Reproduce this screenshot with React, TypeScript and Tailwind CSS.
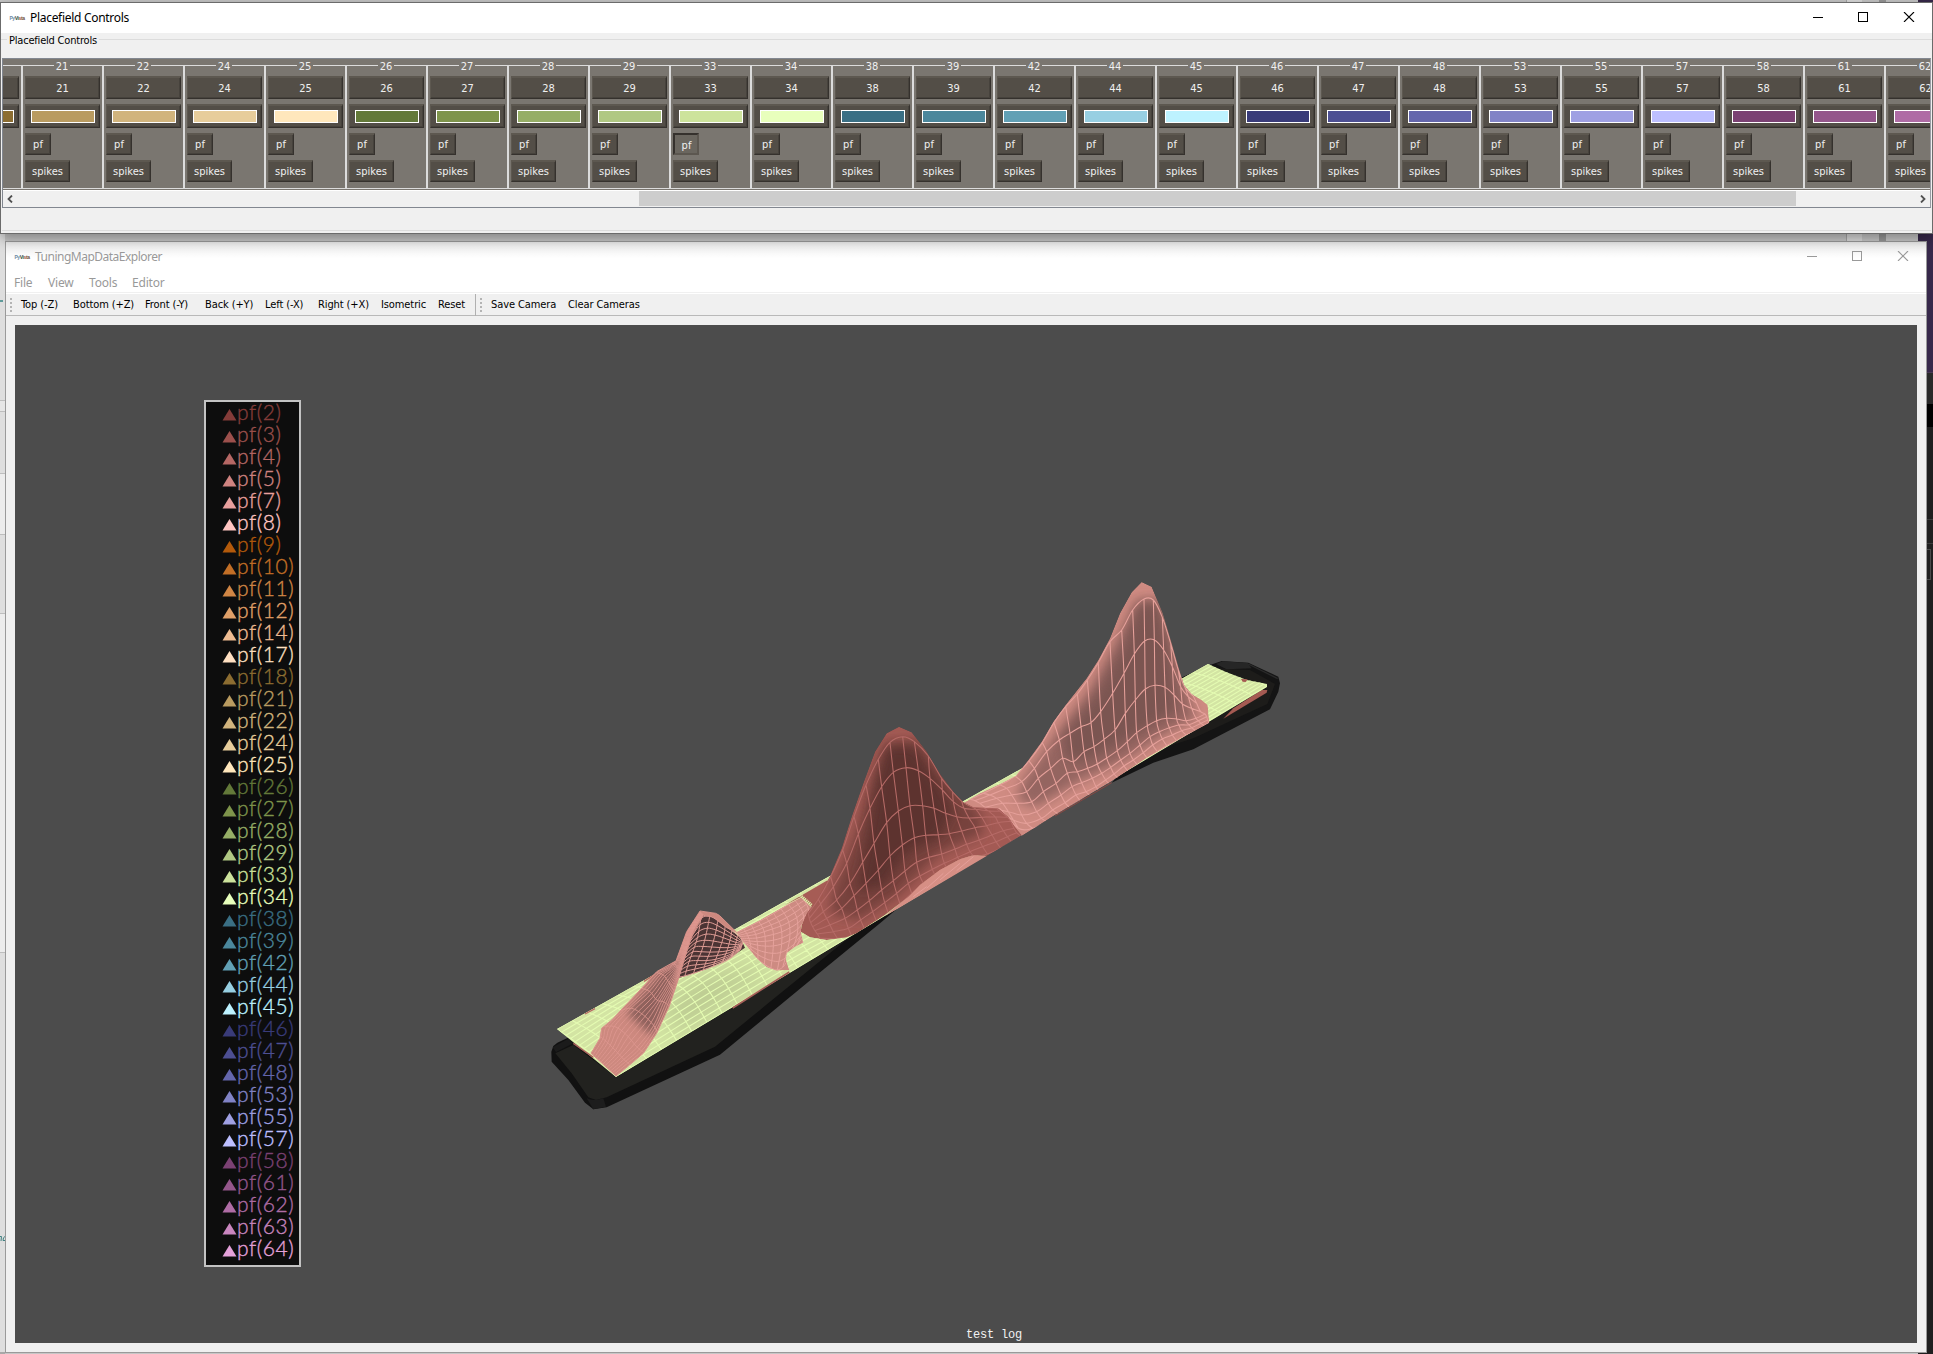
import React from "react";

const UI = "font-['DejaVu_Sans_Condensed','DejaVu_Sans',sans-serif] [font-stretch:condensed] text-[11px]";
const TITLE = "font-['Noto_Sans','Open_Sans',sans-serif] text-[12px]";

/* ---------- data ---------- */
const cells: [number, string][] = [
  [2, "#843c39"], [3, "#9c504c"], [4, "#b56764"], [5, "#cf8380"], [7, "#e8a09d"], [8, "#ffc5c2"],
  [9, "#b35a0b"], [10, "#c26f26"], [11, "#d08645"], [12, "#e0a068"], [14, "#efbc92"], [17, "#ffe0c2"],
  [18, "#8c6d31"], [21, "#b99b60"], [22, "#d1b47d"], [24, "#e7cd9b"], [25, "#ffe7bc"],
  [26, "#637939"], [27, "#7e944b"], [28, "#96ae66"], [29, "#b0c883"], [33, "#cde39c"], [34, "#e8ffbc"],
  [38, "#3a6f84"], [39, "#4b879c"], [42, "#61a0b5"], [44, "#97cfe2"], [45, "#bdf2ff"],
  [46, "#393b79"], [47, "#4d4f93"], [48, "#6466ac"], [53, "#8183c6"], [55, "#9fa0e3"], [57, "#bdbfff"],
  [58, "#7b4173"], [61, "#94568b"], [62, "#af6ca5"], [63, "#c986bf"], [64, "#e4a1da"],
];

const stripCells = cells.slice(13, 37);

/* ---------- geometry helpers ---------- */
type P = [number, number];
const pts = (p: P[]) => p.map((q) => q.join(",")).join(" ");
const smooth = (p: P[]) => {
  let d = `M${p[0][0]} ${p[0][1]}`;
  for (let i = 0; i < p.length - 1; i++) {
    const a = p[i - 1] ?? p[i], b = p[i], c = p[i + 1], e = p[i + 2] ?? c;
    d += `C${b[0] + (c[0] - a[0]) / 6} ${b[1] + (c[1] - a[1]) / 6} ${c[0] - (e[0] - b[0]) / 6} ${c[1] - (e[1] - b[1]) / 6} ${c[0]} ${c[1]}`;
  }
  return d;
};
const at = (c: P[], t: number): P => {
  const f = t * (c.length - 1), i = Math.min(Math.floor(f), c.length - 2), u = f - i;
  return [c[i][0] + (c[i + 1][0] - c[i][0]) * u, c[i][1] + (c[i + 1][1] - c[i][1]) * u];
};
const mesh = (cols: P[][], rows: number) => {
  let d = cols.map(smooth).join("");
  for (let r = 0; r <= rows; r++) d += smooth(cols.map((c) => at(c, r / rows)));
  return d;
};
const densify = (cols: P[][], n: number) => {
  const rows = cols[0].length;
  const out: P[][] = [];
  for (let k = 0; k <= n; k++) {
    const c: P[] = [];
    for (let r = 0; r < rows; r++) c.push(at(cols.map((q) => q[r]), k / n));
    out.push(c);
  }
  return out;
};

/* ---------- surfaces ---------- */
const middle: P[][] = [
  [[85, 640], [88, 655], [92, 668], [98, 680], [105, 692], [112, 702], [120, 715]],
  [[115, 598], [122, 612], [130, 635], [140, 655], [150, 675], [160, 695], [172, 715]],
  [[152, 530], [160, 560], [170, 600], [185, 625], [195, 655], [205, 685], [215, 708]],
  [[188, 450], [200, 490], [210, 550], [222, 587], [232, 630], [242, 660], [255, 690]],
  [[222, 350], [235, 402], [248, 487], [258, 550], [268, 602], [278, 635], [290, 665]],
  [[258, 255], [270, 325], [282, 430], [295, 510], [305, 570], [314, 608], [325, 640]],
  [[295, 178], [305, 260], [320, 368], [330, 468], [340, 542], [350, 580], [360, 612]],
  [[330, 127], [340, 217], [355, 333], [367, 435], [375, 513], [385, 550], [395, 580]],
  [[368, 110], [378, 203], [390, 317], [403, 413], [410, 487], [420, 528], [430, 550]],
  [[403, 125], [415, 212], [428, 317], [437, 406], [447, 472], [457, 508], [468, 530]],
  [[445, 168], [450, 235], [462, 325], [475, 404], [485, 462], [493, 490], [505, 510]],
  [[485, 235], [487, 270], [497, 340], [508, 401], [525, 447], [533, 472], [545, 490]],
  [[518, 275], [520, 305], [530, 350], [545, 393], [560, 433], [570, 455], [585, 472]],
  [[545, 303], [552, 325], [567, 354], [585, 383], [598, 420], [608, 440], [622, 462]],
  [[575, 320], [588, 328], [605, 352], [620, 377], [636, 405], [648, 425], [662, 445]],
  [[612, 324], [624, 332], [645, 350], [655, 368], [670, 392], [682, 410], [694, 425]],
  [[648, 324], [660, 334], [683, 352], [692, 364], [702, 385], [710, 398], [722, 408]],
];
const middleOutline: P[] = [
  [62, 695], [65, 675], [80, 640], [110, 600], [150, 528], [185, 445], [215, 350], [250, 250], [285, 155],
  [320, 100], [357, 80], [395, 97], [440, 155], [480, 222], [520, 275], [550, 307], [580, 322], [655, 325],
  [685, 350], [705, 380], [725, 405], [620, 468], [580, 466], [540, 478], [480, 510], [420, 555], [385, 590],
  [315, 645], [230, 700], [200, 712], [140, 720], [90, 712],
];

const right: P[][] = [
  [[-30, 718], [-15, 722], [0, 730], [15, 742], [30, 745], [45, 745], [60, 746]],
  [[10, 700], [30, 705], [50, 715], [68, 730], [85, 755], [100, 780], [115, 805]],
  [[60, 675], [80, 685], [95, 705], [110, 730], [125, 765], [140, 790], [158, 805]],
  [[105, 648], [125, 665], [140, 695], [155, 725], [170, 755], [185, 775], [200, 785]],
  [[147, 603], [163, 625], [175, 655], [190, 695], [205, 730], [218, 750], [235, 762]],
  [[187, 548], [200, 575], [212, 625], [228, 670], [243, 705], [255, 728], [268, 742]],
  [[222, 488], [238, 540], [248, 595], [262, 640], [276, 680], [288, 705], [300, 722]],
  [[257, 440], [270, 520], [280, 605], [292, 635], [305, 668], [318, 695], [332, 708]],
  [[292, 402], [303, 500], [312, 575], [323, 625], [337, 655], [348, 680], [360, 695]],
  [[322, 360], [333, 488], [342, 560], [352, 612], [365, 640], [377, 660], [390, 675]],
  [[355, 308], [362, 455], [372, 538], [380, 594], [392, 622], [402, 642], [415, 655]],
  [[390, 245], [398, 400], [405, 510], [412, 572], [422, 600], [432, 618], [445, 635]],
  [[425, 210], [432, 340], [436, 460], [442, 545], [450, 580], [460, 600], [473, 615]],
  [[458, 150], [463, 282], [466, 420], [470, 518], [480, 555], [490, 578], [502, 595]],
  [[492, 117], [494, 243], [496, 387], [502, 497], [510, 530], [518, 555], [532, 575]],
  [[520, 120], [523, 240], [525, 376], [530, 482], [538, 515], [547, 537], [560, 557]],
  [[547, 172], [551, 270], [555, 382], [560, 475], [568, 503], [577, 525], [590, 542]],
  [[572, 250], [577, 320], [582, 405], [590, 477], [597, 495], [605, 512], [618, 525]],
  [[595, 330], [602, 380], [607, 432], [618, 482], [627, 494], [635, 503], [647, 512]],
  [[615, 382], [625, 410], [635, 445], [648, 475], [655, 482], [663, 490], [672, 497]],
  [[640, 408], [650, 430], [662, 455], [675, 462], [680, 470], [683, 480], [688, 488]],
];
const rightOutline: P[] = [
  [-60, 735], [0, 700], [60, 672], [108, 647], [145, 600], [185, 545], [220, 485], [255, 437], [320, 355],
  [355, 300], [390, 235], [420, 160], [455, 97], [485, 66], [515, 80], [548, 160], [575, 250], [595, 320],
  [612, 375], [635, 402], [665, 420], [683, 435], [688, 488], [600, 536], [500, 594], [395, 664], [225, 765],
  [125, 828], [60, 760], [-60, 760],
];

const ramp: P[][] = [
  [[153, 520], [172, 537], [192, 555], [210, 572], [228, 588]],
  [[182, 470], [205, 490], [230, 515], [250, 537], [270, 554]],
  [[188, 440], [225, 440], [260, 465], [290, 500], [312, 518]],
  [[240, 392], [275, 385], [310, 405], [340, 435], [352, 458]],
  [[305, 325], [330, 335], [350, 360], [370, 365], [388, 378]],
  [[350, 278], [370, 285], [385, 305], [395, 320], [402, 335]],
  [[400, 247], [405, 252], [412, 262], [418, 265], [422, 268]],
  [[440, 158], [443, 158], [449, 158], [453, 158], [457, 158]],
  [[480, 95], [482, 97], [484, 99], [487, 102], [490, 105]],
];
const rampOutline: P[] = [
  [153, 520], [180, 475], [185, 445], [215, 420], [300, 330], [350, 275], [400, 247], [408, 243], [440, 155],
  [480, 93], [527, 100], [538, 106], [590, 157], [560, 143], [518, 110], [490, 106], [457, 165], [432, 240],
  [415, 298], [388, 378], [350, 460], [310, 520], [265, 558], [228, 588],
];
const hollow: P[][] = [
  [[455, 165], [445, 195], [435, 230], [425, 262], [415, 292]],
  [[487, 108], [478, 165], [465, 205], [450, 245], [438, 287]],
  [[518, 110], [508, 155], [495, 210], [480, 245], [470, 277]],
  [[545, 130], [540, 165], [525, 210], [512, 245], [505, 264]],
  [[570, 148], [565, 175], [555, 210], [545, 235], [538, 252]],
  [[590, 162], [585, 185], [580, 205], [572, 225], [568, 238]],
  [[610, 185], [608, 190], [606, 195], [604, 200], [602, 208]],
];
const flare: P[][] = [
  [[590, 158], [600, 170], [610, 185], [612, 190]],
  [[630, 138], [642, 165], [648, 195], [650, 235]],
  [[670, 118], [688, 150], [690, 200], [685, 262]],
  [[710, 95], [732, 135], [735, 190], [720, 272]],
  [[750, 70], [775, 110], [775, 165], [745, 240]],
  [[785, 50], [805, 85], [805, 120], [788, 188]],
];
const flareOutline: P[] = [
  [588, 157], [660, 120], [730, 80], [785, 52], [815, 82], [785, 135], [783, 160], [790, 188], [765, 200],
  [740, 220], [738, 240], [748, 270], [710, 272], [680, 262], [650, 235], [610, 185],
];

const sheet: P[][] = Array.from({ length: 44 }, (_, i) => {
  const t = i / 43;
  const a: P = [557 + 651 * t, 1029 - 365 * t], b: P = [616 + 651 * t, 1076.7 - 390.7 * t];
  const bump = 12 * Math.sin(Math.PI * Math.min(1, t * 2.6)) + 2;
  return [0, 0.15, 0.3, 0.45, 0.6, 0.75, 0.88, 1].map((u): P => [
    a[0] + (b[0] - a[0]) * u + bump * 0.3 * Math.sin(Math.PI * u),
    a[1] + (b[1] - a[1]) * u - bump * Math.sin(Math.PI * u),
  ]);
});

const Scene = () => (
  <svg className="block h-full w-full" viewBox="15 325 1902 1018">
    <defs>
      <clipPath id="mid"><polygon points={pts(middleOutline)} /></clipPath>
      <clipPath id="rgt"><polygon points={pts(rightOutline)} /></clipPath>
      <clipPath id="rmp"><polygon points={pts(rampOutline)} /></clipPath>
      <clipPath id="flr"><polygon points={pts(flareOutline)} /></clipPath>
      <clipPath id="sht"><polygon points="557,1029 1208,664 1226,672 1247,680 1267,684 1267,687 616,1077" /></clipPath>
      <filter id="shade" x="-50%" y="-50%" width="200%" height="200%"><feGaussianBlur stdDeviation="18" /></filter>
      <filter id="shadeSmall" x="-50%" y="-50%" width="200%" height="200%"><feGaussianBlur stdDeviation="12" /></filter>
    </defs>

    {/* track */}
    <g transform="translate(540 880) scale(.33333)">
      <polygon fill="#111111" points="35,545 34,515 40,498 52,488 90,470 600,300 1150,20 1020,130 800,310 540,524 200,682 160,688 135,668 85,600" />
      <polygon fill="#22221f" points="46,520 100,495 230,592 700,270 930,170 525,500 200,652 168,660 145,652 95,580" />
      <path d="M140 655Q160 665 190 655L198 680 160 688Z" fill="#1d1d1d" />
      <path d="M38 502L85 476 100 490 48 516Z" fill="#1b1b1b" />
    </g>
    <g transform="translate(980 560) scale(.33333)">
      <polygon fill="#141414" points="560,372 610,350 690,315 725,303 805,308 895,350 900,370 895,395 870,448 640,568 520,608 395,668 560,480" />
      <polygon fill="#1d1c1a" points="690,320 740,328 810,330 885,372 862,432 640,535 560,560 600,400" />
      <polygon fill="#262626" points="708,312 728,304 803,309 815,325 740,328" />
      <path d="M805 312L893 356" stroke="#2a2a2a" strokeWidth="4" />
      <polygon fill="#a55a52" points="845,390 862,390 860,398 730,476 760,445" />
    </g>

    {/* flat field */}
    <g clipPath="url(#sht)">
      <rect x="550" y="650" width="730" height="440" fill="#d3e4a3" />
      <path d="M660 1010L700 975 760 965 770 975 730 1000 680 1035Z" fill="#bccb92" filter="url(#shadeSmall)" />
      <path d={mesh(sheet, 14)} fill="none" stroke="#e4fbb2" strokeWidth="1.1" />
    </g>
    <g transform="translate(980 560) scale(.33333)">
      <path d="M395 668L225 768" stroke="#8a4742" strokeWidth="3" />
      <polygon fill="#a55a52" points="783,357 803,358 797,366 788,365" />
    </g>

    {/* left field */}
    <g transform="translate(540 880) scale(.33333)">
      <path d="M578 384L748 276" stroke="#a8605a" strokeWidth="5" />
      <path d="M100 490L160 532" stroke="#a8605a" strokeWidth="4" />
      <path d="M135 402L165 386M312 304L350 280" stroke="#b86a63" strokeWidth="4" />
      <polygon fill="#a65c55" points="730,78 860,2 900,0 860,60 815,80 785,50" />
      <g clipPath="url(#flr)">
        <polygon points={pts(flareOutline)} fill="#cd8b82" />
        <path d={mesh(densify(flare, 9), 9)} fill="none" stroke="#e5a29c" strokeWidth="3" />
      </g>
      <path d="M780 45L795 58 815 76" stroke="#dcf0a9" strokeWidth="9" strokeDasharray="4 2" fill="none" />
      <polygon fill="#4b3434" points="490,105 520,108 560,140 600,172 615,203 560,240 500,267 415,295 430,240 455,165" />
      <path d={mesh(densify(hollow, 7), 11)} fill="none" stroke="#df9c95" strokeWidth="3" />
      <g clipPath="url(#rmp)">
        <polygon points={pts(rampOutline)} fill="#cd897f" />
        <path d="M380 250L260 400 340 470 430 290 440 220Z" fill="#8d605b" filter="url(#shadeSmall)" />
        <path d={mesh(ramp, 13)} fill="none" stroke="#de9890" strokeWidth="2.4" />
      </g>
      <polygon points={pts(rampOutline)} fill="none" stroke="#d8928a" strokeWidth="3" />
    </g>

    {/* right field */}
    <g transform="translate(980 560) scale(.33333)">
      <g clipPath="url(#rgt)">
        <polygon points={pts(rightOutline)} fill="#cf8b82" />
        <path d="M470 120L540 120 590 290 635 430 650 475 560 520 440 600 300 665 170 740 110 720 130 660 230 520 330 390 400 260Z" fill="#946560" filter="url(#shade)" />
        <path d="M480 130L530 125 565 250 590 450 440 540 320 600 260 600 250 530 350 400 430 260Z" fill="#775250" opacity=".85" filter="url(#shade)" />
        <path d={mesh(right, 6)} fill="none" stroke="#e5a09a" strokeWidth="3.2" />
      </g>
    </g>

    {/* middle field */}
    <g transform="translate(780 700) scale(.33333)">
      <polygon fill="#d68f85" points="620,468 580,464 540,476 480,508 420,553 385,588 315,648 350,628" />
      <path d="M400 590L440 560M440 565L490 520M480 540L540 490M530 512L580 470" stroke="#e5a09a" strokeWidth="3" />
      <g clipPath="url(#mid)">
        <polygon points={pts(middleOutline)} fill="#a35a54" />
        <path d="M320 125L410 120 520 260 600 340 610 400 480 460 350 590 240 660 150 640 160 570 230 390 280 220Z" fill="#77423d" filter="url(#shade)" />
        <path d="M320 140L405 140 470 240 520 330 480 410 380 460 310 560 230 570 260 420 290 250Z" fill="#5a322f" opacity=".9" filter="url(#shade)" />
        <path d={mesh(middle, 6)} fill="none" stroke="#b56a66" strokeWidth="3.2" />
      </g>
    </g>
  </svg>
);

/* ---------- chrome ---------- */
const AppIcon = () => (
  <span className="flex h-4 w-4 items-center justify-center font-['Liberation_Sans',sans-serif] text-[5px] font-bold leading-none tracking-[-0.4px]">
    <span className="text-[#6f8ba5]">Py</span>
    <span className="text-[#2f4a3c]">Vi</span>
    <span className="text-[#a0522d]">s</span>
    <span className="text-[#6d4b3a]">ta</span>
  </span>
);

const WindowButtons = ({ color }: { color: string }) => (
  <svg className="h-[10px] w-[102px]" viewBox="0 0 102 10" fill="none" stroke={color} shapeRendering="crispEdges">
    <path d="M0 5.5H10" />
    <rect x="45.5" y="0.5" width="9" height="9" />
    <path d="M91 0L101 10M101 0L91 10" shapeRendering="auto" strokeWidth="1.1" />
  </svg>
);

const RAISED = "border-t-2 border-l border-t-[#5d5850] border-l-[#5d5850] border-b border-r border-b-[#35312d] border-r-[#35312d] bg-[#534e47] shadow-[inset_-1px_-1px_0_#46423c]";

const Column = ({ id, color }: { id: number; color: string }) => (
  <div className={`relative flex h-[124px] w-[81px] shrink-0 flex-col items-start border border-[#dcdcdc] pl-[2px] pt-[10px] text-[#f0f0f0] ${UI}`}>
    <span className="absolute left-[31px] top-[-7px] w-[16px] bg-[#7a7670] text-center leading-[15px]">{id}</span>
    <div className={`flex h-[23px] w-[75px] items-center justify-center pt-[2px] ${RAISED}`}>{id}</div>
    <div className={`mt-[5px] flex h-6 w-[75px] items-center justify-center ${RAISED}`}>
      <div className="h-[13px] w-[64px] border border-white" style={{ backgroundColor: color }} />
    </div>
    {id === 33 ? (
      <div className="mt-[5px] flex h-[22px] w-[26px] items-center justify-center border-2 border-b-[#5c5750] border-l-[#35312d] border-r-[#5c5750] border-t-[#35312d] bg-[#6a665f] pl-px pt-[4px]">pf</div>
    ) : (
      <div className={`mt-[5px] flex h-[22px] w-[26px] items-center justify-center pt-[2px] ${RAISED}`}>pf</div>
    )}
    <div className={`mt-[5px] flex h-[22px] w-[45px] items-center justify-center pt-[2px] ${RAISED}`}>spikes</div>
  </div>
);

/* visible right edge of the group that is scrolled out on the left */
const ColumnTail = () => (
  <div className="flex h-[124px] w-[19px] shrink-0 flex-col border-y border-r border-[#dcdcdc] pt-[10px]">
    <div className={`h-[23px] w-[16px] ${RAISED} border-l-0`} />
    <div className={`mt-[5px] flex h-6 w-[16px] items-center ${RAISED} border-l-0`}>
      <div className="h-[13px] w-[11px] border border-l-0 border-white bg-[#8c6d31]" />
    </div>
  </div>
);

const Chevron = ({ flip }: { flip?: boolean }) => (
  <svg className="h-[8px] w-[6px]" viewBox="0 0 6 8" fill="none" stroke="#505050" strokeWidth="1.8">
    <path d={flip ? "M1 .5L4.5 4 1 7.5" : "M5 .5L1.5 4 5 7.5"} />
  </svg>
);

const ControlsWindow = () => (
  <div className="absolute left-0 top-[2px] flex h-[232px] w-[1933px] flex-col border border-[#6b6b6b] bg-[#f0f0f0] shadow-[0_4px_12px_rgba(0,0,0,0.35)]">
    <div className="flex h-[30px] shrink-0 items-center bg-white pl-[8px] pr-[13px]">
      <AppIcon />
      <span className={`ml-[5px] flex-1 text-black ${TITLE} tracking-[-0.3px]`}>Placefield Controls</span>
      <div className="-translate-y-px pr-[4px]"><WindowButtons color="#000000" /></div>
    </div>
    <div className="relative flex h-[25px] shrink-0 items-start pt-[6px]">
      <div className="h-px w-full bg-[#dcdcdc]" />
      <span className={`absolute left-[6px] top-px whitespace-nowrap bg-[#f0f0f0] px-[2px] leading-[14px] tracking-[-0.2px] text-black ${UI}`}>Placefield Controls</span>
    </div>
    <div className="mx-px flex h-[150px] shrink-0 flex-col overflow-hidden border border-r-[#9a9ca4] border-l-[#828790] border-t-[#828790] border-b-[#828790]">
      <div className="flex h-[131px] shrink-0 overflow-hidden bg-[#7a7670] pt-[6px]">
        <ColumnTail />
        {stripCells.map(([id, color]) => (
          <Column key={id} id={id} color={color} />
        ))}
      </div>
      <div className="flex h-[17px] items-center border-t border-white bg-[#f0f0f0] pb-px pl-[4px] pr-[4px]">
        <Chevron />
        <div className="ml-[626px] h-[15px] w-[1157px] bg-[#cdcdcd]" />
        <div className="flex-1" />
        <Chevron flip />
      </div>
    </div>
    <div className="mx-px mt-[22px] h-px bg-[#dcdcdc]" />
  </div>
);

const menu: [string, string][] = [
  ["File", "w-[34px]"], ["View", "w-[41px]"], ["Tools", "w-[43px]"], ["Editor", "w-[40px]"],
];
const tools: [string, string][] = [
  ["Top (-Z)", "w-[52px]"], ["Bottom (+Z)", "w-[72px]"], ["Front (-Y)", "w-[60px]"], ["Back (+Y)", "w-[60px]"],
  ["Left (-X)", "w-[53px]"], ["Right (+X)", "w-[63px]"], ["Isometric", "w-[57px]"], ["Reset", "w-[37px]"],
];

const Grip = () => (
  <div className="flex flex-col gap-[2px]">
    {[0, 1, 2, 3].map((i) => (
      <div key={i} className="h-[2px] w-[2px] bg-[#b4b4b4]" />
    ))}
  </div>
);

const Legend = () => (
  <div className="absolute left-[189px] top-[75px] flex h-[867px] w-[97px] flex-col border-2 border-[#c3c3c3] bg-[#0d0d0d] pl-[16px]">
    {cells.map(([id, color]) => (
      <div key={id} className="flex h-[22px] shrink-0 items-center" style={{ color }}>
        <svg className="mt-[4px] h-[12px] w-[15px] shrink-0" viewBox="0 0 15 12">
          <path d="M7.5 0L14.5 11.5H.5Z" fill="currentColor" />
        </svg>
        <span className="-mt-[3px] font-['Lato',sans-serif] text-[21px] font-light leading-[22px] tracking-[0.55px] [-webkit-text-stroke:0.35px]">pf({id})</span>
      </div>
    ))}
  </div>
);

const ExplorerWindow = () => (
  <div className="absolute left-[5px] top-[241px] flex h-[1112px] w-[1922px] flex-col border border-[#9a9a9a] bg-[#f0f0f0]">
    <div className="flex h-[32px] shrink-0 items-center bg-linear-to-b from-[#e9e9e9] via-white via-50% to-white pb-[2px] pl-[8px] pr-[13px]">
      <AppIcon />
      <span className={`ml-[5px] flex-1 text-[#999999] ${TITLE} tracking-[-0.5px]`}>TuningMapDataExplorer</span>
      <div className="-translate-y-px pr-[4px]"><WindowButtons color="#999999" /></div>
    </div>
    <div className={`flex h-[19px] shrink-0 items-center border-b border-[#f0f0f0] bg-white pl-[8px] tracking-[-0.2px] text-[#999999] ${TITLE}`}>
      {menu.map(([label, w]) => (
        <span key={label} className={w}>{label}</span>
      ))}
    </div>
    <div className={`flex h-[23px] shrink-0 items-center whitespace-nowrap border-b border-t border-b-[#b9b9b9] border-t-white pl-[4px] tracking-[-0.1px] text-black ${UI}`}>
      <Grip />
      <div className="ml-[9px] flex pt-[2px]">
        {tools.map(([label, w]) => (
          <span key={label} className={w}>{label}</span>
        ))}
      </div>
      <div className="mr-[4px] h-[22px] w-px bg-[#b0b0b0]" />
      <Grip />
      <span className="ml-[9px] w-[77px] pt-[2px]">Save Camera</span>
      <span className="pt-[2px]">Clear Cameras</span>
    </div>
    <div className="relative ml-[9px] mt-[9px] h-[1018px] w-[1902px] bg-[#4c4c4c]">
      <Scene />
      <Legend />
      <span className="absolute bottom-[1px] left-[951px] font-['Liberation_Mono',monospace] text-[12px] leading-[14px] tracking-[-0.2px] text-[#f2f2f2]">test log</span>
    </div>
  </div>
);

const LeftEdge = () => (
  <div className="absolute left-0 top-[234px] flex h-[1120px] w-[5px] flex-col overflow-hidden bg-[#dedede]">
    <div className="flex h-[167px] shrink-0 flex-col border-b border-[#bdbdbd] pt-[66px]">
      <div className="h-[2px] w-[3px] bg-[#5f9a9a]" />
    </div>
    <div className="h-[11px] shrink-0 border-b border-[#bdbdbd] bg-[#e6e6e6]" />
    <div className="h-[62px] shrink-0 border-b border-[#bdbdbd]" />
    <div className="h-[61px] shrink-0 border-b border-[#bdbdbd] bg-[#ececec]" />
    <div className="h-[79px] shrink-0 border-b border-[#bdbdbd]" />
    <div className="h-[339px] shrink-0 border-b border-[#bdbdbd] bg-[#ececec]" />
    <div className="flex-1 pt-[282px]">
      <svg className="h-[7px] w-[5px]" viewBox="0 0 5 7" fill="none" stroke="#3f8080">
        <path d="M0 1.5H1.5L1 6M5 1.5Q3 2 3 5.5H5" />
      </svg>
    </div>
    <div className="h-[2px] bg-[#a8a8a8]" />
  </div>
);

const RightEdge = () => (
  <div className="absolute right-0 top-0 flex h-[1354px] w-[15px] flex-col bg-[#1f1f1f]">
    <div className="h-[373px] border-b border-[#4a3a55] bg-[#37284a]" />
    <div className="h-[31px] bg-[#292929]" />
    <div className="h-[23px] bg-black" />
    <div className="h-[93px] border-b border-[#3c3c3c]" />
    <div className="h-[24px] border-b border-[#3c3c3c]" />
    <div className="mr-[2px] mt-[5px] h-[31px] border border-[#4a4a4a]" />
  </div>
);

export default function App() {
  return (
    <div className="relative h-[1354px] w-[1933px] overflow-hidden bg-[#c6c6c6]">
      <div className="flex h-[241px] justify-end pr-[15px]">
        <div className="w-px bg-[#a5a5a5]" />
        <div className="w-[15px] bg-[#dadada]" />
        <div className="w-[17px]" />
        <div className="w-[7px] bg-[#979797]" />
        <div className="w-[32px]" />
      </div>
      <LeftEdge />
      <RightEdge />
      <ExplorerWindow />
      <ControlsWindow />
    </div>
  );
}
